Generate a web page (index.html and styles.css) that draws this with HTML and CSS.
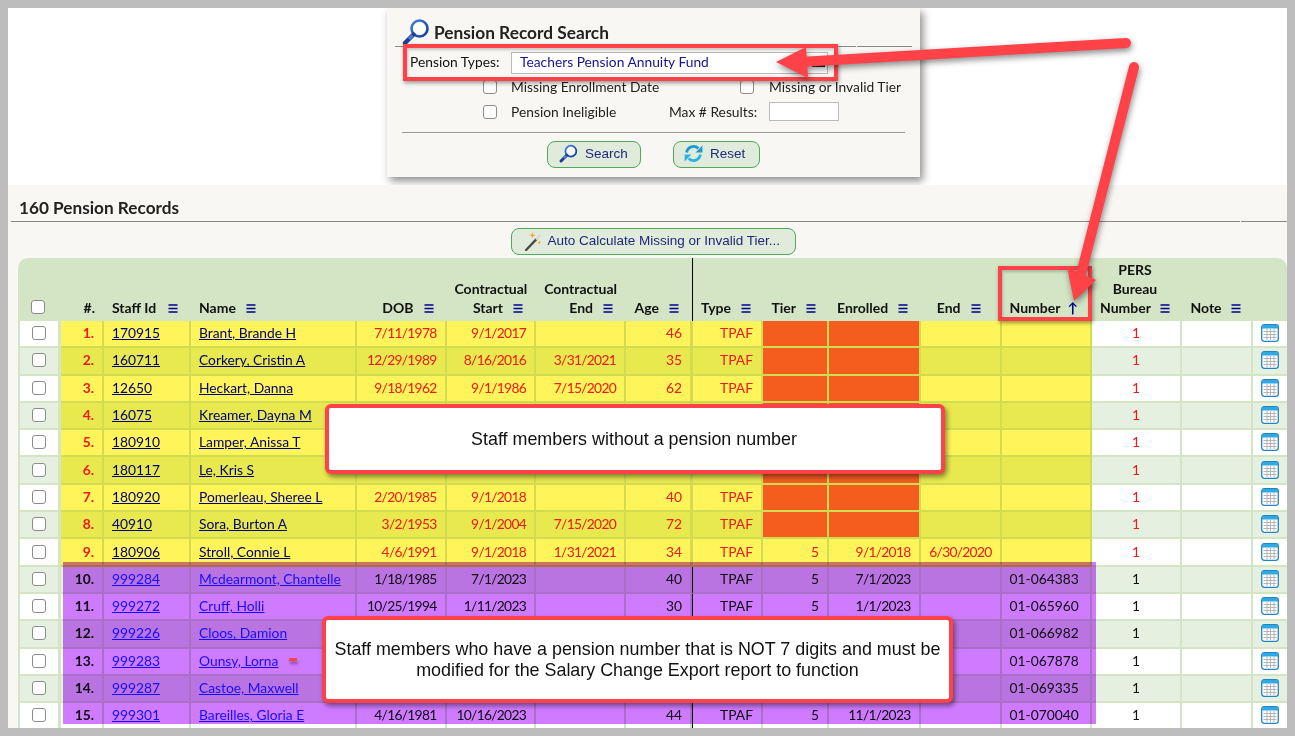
FILE: index.html
```html
<!DOCTYPE html>
<html lang="en">
<head>
<meta charset="utf-8">
<title>Pension Record Search</title>
<link rel="stylesheet" href="styles.css">
</head>
<body>
<svg class="defs" width="0" height="0" aria-hidden="true">
  <defs>
    <linearGradient id="lens" x1="0" y1="0" x2="1" y2="1"><stop offset="0" stop-color="#3f82dc"/><stop offset="1" stop-color="#0b3a9a"/></linearGradient>
    <symbol id="i-mag" viewBox="0 0 28 28">
      <circle cx="17.5" cy="10.5" r="8" fill="#fbfbf8" stroke="url(#lens)" stroke-width="2.6"/>
      <path d="M11.5 16.5 3 25" stroke="#1c3f94" stroke-width="4.4" stroke-linecap="round"/>
      <path d="M10.5 17.5 7 21" stroke="#4d82d8" stroke-width="3"/>
    </symbol>
    <symbol id="i-reset" viewBox="0 0 18 18">
      <path d="M2.5 8A6.6 6.6 0 0 1 13.6 4.2" fill="none" stroke="#1b9ad6" stroke-width="2.6"/>
      <path d="M11 8h6.4V1.4z" fill="#1b9ad6"/>
      <path d="M15.5 10A6.6 6.6 0 0 1 4.4 13.8" fill="none" stroke="#28b4e4" stroke-width="2.6"/>
      <path d="M7 10H.6v6.6z" fill="#28b4e4"/>
    </symbol>
    <symbol id="i-wand" viewBox="0 0 18 18">
      <path d="M2 17 12 6.500" stroke="#4a4a44" stroke-width="2.200" stroke-linecap="round"/>
      <path d="M12 6.500 15 3.500" stroke="#d8d8d0" stroke-width="2.200" stroke-linecap="round"/>
      <path d="M8 0l.7 2.300 2.300.7-2.300.7L8 6l-.7-2.300L5 3l2.300-.7z" fill="#f3a52c"/>
      <path d="M14.500 8l.5 1.500 1.500.5-1.500.5-.5 1.500-.5-1.500-1.500-.5 1.500-.5z" fill="#f3a52c"/>
    </symbol>
    <symbol id="i-menu" viewBox="0 0 10 10">
      <path d="M0 1h10M0 5h10M0 9h10" stroke="#000090" stroke-width="1.700"/>
    </symbol>
    <symbol id="i-cal" viewBox="0 0 18 18">
      <rect x=".7" y=".7" width="16.600" height="16.600" rx="2.500" fill="#fff" stroke="#1f86c6" stroke-width="1.300"/>
      <path d="M1 3a2 2 0 0 1 2-2h12a2 2 0 0 1 2 2v1.500H1z" fill="#2fa8e4"/>
      <path d="M2.500 7.500h13M2.500 10.500h13M2.500 13.500h13M6 5v11M9.500 5v11M13 5v11" stroke="#b4b4b4" stroke-width="1" fill="none"/>
    </symbol>
  </defs>
</svg>

<div class="window">
  <div class="top">
    <section class="panel">
      <header class="panel-head">
        <svg class="mag-lg"><use href="#i-mag"/></svg>
        <h1 class="panel-title">Pension Record Search</h1>
      </header>
      <div class="rule-split"><span></span><span></span></div>
      <div class="type-row">
        <label class="type-label">Pension Types:</label>
        <div class="select"><span>Teachers Pension Annuity Fund</span><i class="select-dash"></i></div>
      </div>
      <div class="filters">
        <input type="checkbox" class="check"><span>Missing Enrollment Date</span>
        <input type="checkbox" class="check"><span>Missing or Invalid Tier</span>
      </div>
      <div class="filters second">
        <input type="checkbox" class="check"><span>Pension Ineligible</span>
        <span class="max-label">Max # Results:</span><div class="max-input"></div>
      </div>
      <div class="panel-rule"></div>
      <div class="actions">
        <button class="btn btn-search"><svg class="btn-icon"><use href="#i-mag"/></svg>Search</button>
        <button class="btn btn-reset"><svg class="btn-icon"><use href="#i-reset"/></svg>Reset</button>
      </div>
    </section>
  </div>

  <div class="records">
    <h2 class="records-title">160 Pension Records</h2>
    <div class="rule-split wide"><span></span><span></span></div>
    <div class="auto-row">
      <button class="btn btn-auto"><svg class="btn-icon"><use href="#i-wand"/></svg>Auto Calculate Missing or Invalid Tier...</button>
    </div>
    <table class="grid">
      <colgroup>
        <col class="c1"><col class="c2"><col class="c3"><col class="c4"><col class="c5"><col class="c6"><col class="c7"><col class="c8"><col class="c9"><col class="c10"><col class="c11"><col class="c12"><col class="c13"><col class="c14"><col class="c15"><col class="c16">
      </colgroup>
      <thead>
        <tr>
          <th class="ctr"><input type="checkbox" class="check"></th>
          <th class="r">#.</th>
          <th class="l staff-h">Staff Id<svg class="mi"><use href="#i-menu"/></svg></th>
          <th class="l">Name<svg class="mi"><use href="#i-menu"/></svg></th>
          <th class="r">DOB<svg class="mi"><use href="#i-menu"/></svg></th>
          <th class="r">Contractual<br>Start<svg class="mi"><use href="#i-menu"/></svg></th>
          <th class="r">Contractual<br>End<svg class="mi"><use href="#i-menu"/></svg></th>
          <th class="r">Age<svg class="mi"><use href="#i-menu"/></svg></th>
          <th class="r">Type<svg class="mi"><use href="#i-menu"/></svg></th>
          <th class="r">Tier<svg class="mi"><use href="#i-menu"/></svg></th>
          <th class="r">Enrolled<svg class="mi"><use href="#i-menu"/></svg></th>
          <th class="r end-h">End<svg class="mi"><use href="#i-menu"/></svg></th>
          <th class="l pad-num">Number<span class="sort">↑</span></th>
          <th class="ctr">PERS<br>Bureau<br>Number<svg class="mi"><use href="#i-menu"/></svg></th>
          <th class="ctr">Note<svg class="mi"><use href="#i-menu"/></svg></th>
          <th></th>
        </tr>
      </thead>
      <tbody>
        <tr class="warn"><td class="ctr"><input type="checkbox" class="check"></td><td class="idx">1.</td><td><a href="#">170915</a></td><td><a href="#">Brant, Brande H</a></td><td class="r">7/11/1978</td><td class="r">9/1/2017</td><td class="r"></td><td class="r">46</td><td class="r">TPAF</td><td class="bad"></td><td class="bad"></td><td></td><td class="last"></td><td class="ctr alert">1</td><td></td><td class="ctr"><svg class="cal"><use href="#i-cal"/></svg></td></tr>
        <tr class="warn"><td class="ctr"><input type="checkbox" class="check"></td><td class="idx">2.</td><td><a href="#">160711</a></td><td><a href="#">Corkery, Cristin A</a></td><td class="r">12/29/1989</td><td class="r">8/16/2016</td><td class="r">3/31/2021</td><td class="r">35</td><td class="r">TPAF</td><td class="bad"></td><td class="bad"></td><td></td><td class="last"></td><td class="ctr alert">1</td><td></td><td class="ctr"><svg class="cal"><use href="#i-cal"/></svg></td></tr>
        <tr class="warn"><td class="ctr"><input type="checkbox" class="check"></td><td class="idx">3.</td><td><a href="#">12650</a></td><td><a href="#">Heckart, Danna</a></td><td class="r">9/18/1962</td><td class="r">9/1/1986</td><td class="r">7/15/2020</td><td class="r">62</td><td class="r">TPAF</td><td class="bad"></td><td class="bad"></td><td></td><td class="last"></td><td class="ctr alert">1</td><td></td><td class="ctr"><svg class="cal"><use href="#i-cal"/></svg></td></tr>
        <tr class="warn"><td class="ctr"><input type="checkbox" class="check"></td><td class="idx">4.</td><td><a href="#">16075</a></td><td><a href="#">Kreamer, Dayna M</a></td><td class="r"></td><td class="r"></td><td class="r"></td><td class="r"></td><td class="r"></td><td class="bad"></td><td class="bad"></td><td></td><td class="last"></td><td class="ctr alert">1</td><td></td><td class="ctr"><svg class="cal"><use href="#i-cal"/></svg></td></tr>
        <tr class="warn"><td class="ctr"><input type="checkbox" class="check"></td><td class="idx">5.</td><td><a href="#">180910</a></td><td><a href="#">Lamper, Anissa T</a></td><td class="r"></td><td class="r"></td><td class="r"></td><td class="r"></td><td class="r"></td><td class="bad"></td><td class="bad"></td><td></td><td class="last"></td><td class="ctr alert">1</td><td></td><td class="ctr"><svg class="cal"><use href="#i-cal"/></svg></td></tr>
        <tr class="warn"><td class="ctr"><input type="checkbox" class="check"></td><td class="idx">6.</td><td><a href="#">180117</a></td><td><a href="#">Le, Kris S</a></td><td class="r"></td><td class="r"></td><td class="r"></td><td class="r"></td><td class="r"></td><td class="bad"></td><td class="bad"></td><td></td><td class="last"></td><td class="ctr alert">1</td><td></td><td class="ctr"><svg class="cal"><use href="#i-cal"/></svg></td></tr>
        <tr class="warn"><td class="ctr"><input type="checkbox" class="check"></td><td class="idx">7.</td><td><a href="#">180920</a></td><td><a href="#">Pomerleau, Sheree L</a></td><td class="r">2/20/1985</td><td class="r">9/1/2018</td><td class="r"></td><td class="r">40</td><td class="r">TPAF</td><td class="bad"></td><td class="bad"></td><td></td><td class="last"></td><td class="ctr alert">1</td><td></td><td class="ctr"><svg class="cal"><use href="#i-cal"/></svg></td></tr>
        <tr class="warn"><td class="ctr"><input type="checkbox" class="check"></td><td class="idx">8.</td><td><a href="#">40910</a></td><td><a href="#">Sora, Burton A</a></td><td class="r">3/2/1953</td><td class="r">9/1/2004</td><td class="r">7/15/2020</td><td class="r">72</td><td class="r">TPAF</td><td class="bad"></td><td class="bad"></td><td></td><td class="last"></td><td class="ctr alert">1</td><td></td><td class="ctr"><svg class="cal"><use href="#i-cal"/></svg></td></tr>
        <tr class="warn"><td class="ctr"><input type="checkbox" class="check"></td><td class="idx">9.</td><td><a href="#">180906</a></td><td><a href="#">Stroll, Connie L</a></td><td class="r">4/6/1991</td><td class="r">9/1/2018</td><td class="r">1/31/2021</td><td class="r">34</td><td class="r">TPAF</td><td class="r">5</td><td class="r">9/1/2018</td><td class="r">6/30/2020</td><td class="last"></td><td class="ctr alert">1</td><td></td><td class="ctr"><svg class="cal"><use href="#i-cal"/></svg></td></tr>
        <tr class="ok"><td class="ctr"><input type="checkbox" class="check"></td><td class="idx">10.</td><td><a href="#">999284</a></td><td><a href="#">Mcdearmont, Chantelle</a></td><td class="r">1/18/1985</td><td class="r">7/1/2023</td><td class="r"></td><td class="r">40</td><td class="r">TPAF</td><td class="r">5</td><td class="r">7/1/2023</td><td class="r"></td><td class="l pad-num">01-064383</td><td class="ctr">1</td><td></td><td class="ctr"><svg class="cal"><use href="#i-cal"/></svg></td></tr>
        <tr class="ok"><td class="ctr"><input type="checkbox" class="check"></td><td class="idx">11.</td><td><a href="#">999272</a></td><td><a href="#">Cruff, Holli</a></td><td class="r">10/25/1994</td><td class="r">1/11/2023</td><td class="r"></td><td class="r">30</td><td class="r">TPAF</td><td class="r">5</td><td class="r">1/1/2023</td><td class="r"></td><td class="l pad-num">01-065960</td><td class="ctr">1</td><td></td><td class="ctr"><svg class="cal"><use href="#i-cal"/></svg></td></tr>
        <tr class="ok"><td class="ctr"><input type="checkbox" class="check"></td><td class="idx">12.</td><td><a href="#">999226</a></td><td><a href="#">Cloos, Damion</a></td><td class="r"></td><td class="r"></td><td class="r"></td><td class="r"></td><td class="r"></td><td class="r"></td><td class="r"></td><td class="r"></td><td class="l pad-num">01-066982</td><td class="ctr">1</td><td></td><td class="ctr"><svg class="cal"><use href="#i-cal"/></svg></td></tr>
        <tr class="ok"><td class="ctr"><input type="checkbox" class="check"></td><td class="idx">13.</td><td><a href="#">999283</a></td><td><a href="#">Ounsy, Lorna</a></td><td class="r"></td><td class="r"></td><td class="r"></td><td class="r"></td><td class="r"></td><td class="r"></td><td class="r"></td><td class="r"></td><td class="l pad-num">01-067878</td><td class="ctr">1</td><td></td><td class="ctr"><svg class="cal"><use href="#i-cal"/></svg></td></tr>
        <tr class="ok"><td class="ctr"><input type="checkbox" class="check"></td><td class="idx">14.</td><td><a href="#">999287</a></td><td><a href="#">Castoe, Maxwell</a></td><td class="r"></td><td class="r"></td><td class="r"></td><td class="r"></td><td class="r"></td><td class="r"></td><td class="r"></td><td class="r"></td><td class="l pad-num">01-069335</td><td class="ctr">1</td><td></td><td class="ctr"><svg class="cal"><use href="#i-cal"/></svg></td></tr>
        <tr class="ok"><td class="ctr"><input type="checkbox" class="check"></td><td class="idx">15.</td><td><a href="#">999301</a></td><td><a href="#">Bareilles, Gloria E</a></td><td class="r">4/16/1981</td><td class="r">10/16/2023</td><td class="r"></td><td class="r">44</td><td class="r">TPAF</td><td class="r">5</td><td class="r">11/1/2023</td><td class="r"></td><td class="l pad-num">01-070040</td><td class="ctr">1</td><td></td><td class="ctr"><svg class="cal"><use href="#i-cal"/></svg></td></tr>
      </tbody>
    </table>
  </div>

  <div class="tint"></div>
  <div class="mark"></div>
  <div class="callout callout-a">Staff members without a pension number</div>
  <div class="callout callout-b">Staff members who have a pension number that is NOT 7 digits and must be<br>modified for the Salary Change Export report to function</div>
  <div class="focus focus-type"></div>
  <div class="focus focus-number"></div>
  <svg class="arrows" width="1295" height="736" viewBox="0 0 1295 736">
    <path d="M1126 43 800 62" stroke="#ff4148" stroke-width="10" stroke-linecap="round" fill="none"/>
    <path d="M776 62 806 47 808 78z" fill="#ff4148"/>
    <path d="M1134 67 1080 278" stroke="#ff4148" stroke-width="10" stroke-linecap="round" fill="none"/>
    <path d="M1074 301 1067 267 1096 280z" fill="#ff4148"/>
  </svg>
</div>
</body>
</html>
```
FILE: styles.css
```css
* { box-sizing: border-box; }
html, body { margin: 0; height: 736px; overflow: hidden; }
body { background: #bdbdbd; font-family: "Lato", "Noto Sans", sans-serif; color: #111; font-size: 14px; }
.defs { position: absolute; }
.window { position: absolute; left: 8px; top: 8px; width: 1279px; height: 720px; background: #fff; overflow: hidden; }

/* top search panel */
.top { height: 177px; padding-left: 379px; }
.panel { width: 533px; height: 169px; background: #f8f7f3; box-shadow: 3px 4px 8px rgba(0,0,0,.45); padding: 9px 8px 0; }
.panel-head { display: flex; align-items: flex-end; height: 29px; padding-left: 7px; gap: 4px; }
.mag-lg { width: 28px; height: 28px; }
.panel-title { margin: 0 0 2px; font-size: 17.300px; font-weight: 700; color: #222; line-height: 22px; }
.rule-split { display: flex; gap: 1px; height: 1px; }
.rule-split span { background: #888; height: 1px; }
.rule-split span:first-child { width: 461px; }
.rule-split span:last-child { width: 55px; }
.type-row { display: flex; align-items: flex-start; height: 27px; padding: 5px 0 0 15px; }
.type-label { width: 101px; font-size: 13.800px; line-height: 19px; }
.select { width: 317px; height: 22px; background: #fff; border: 1px solid #bbb; display: flex; align-items: center; padding: 0 0 4px 8px; color: #14148c; font-size: 13.800px; position: relative; }
.select-dash { position: absolute; right: 2px; bottom: 6px; width: 13px; height: 2px; background: #222; }
.filters { display: grid; grid-template-columns: 28px 229px 29px auto; align-items: center; height: 25px; padding-left: 88px; font-size: 13.800px; color: #222; }
.filters.second { grid-template-columns: 28px 158px 100px auto; }
.filters .max-label { white-space: nowrap; }
.max-input { width: 70px; height: 19px; background: #fff; border: 1px solid #bbb; }
.check { appearance: none; width: 14px; height: 14px; margin: 0; background: #fff; border: 1.500px solid #8c8c8c; border-radius: 3px; display: block; }
.panel-rule { height: 1px; background: #999; margin: 8px 7px 0; }
.actions { display: flex; justify-content: center; gap: 32px; padding: 8px 0 0 0; }
.btn { display: inline-flex; align-items: center; height: 27px; padding: 0 12px 2px 11px; background: #e1ebdb; border: 1px solid #4ea95a; border-radius: 8px; font-family: "Liberation Sans", Arial, sans-serif; font-size: 13.500px; color: #1d2a7a; }
.btn-icon { width: 19px; height: 19px; margin-right: 7px; flex: none; }
.btn-search { width: 94px; }
.btn-reset { width: 87px; padding-left: 10px; }

/* records */
.records { background: #f8f7f3; height: 543px; padding: 13px 0 0 3px; }
.records-title { margin: 0; padding-left: 8px; font-size: 17.200px; font-weight: 700; line-height: 20px; color: #222; }
.rule-split.wide { margin-top: 3px; }
.rule-split.wide span:first-child { width: 1229px; }
.rule-split.wide span:last-child { width: 46px; }
.auto-row { display: flex; justify-content: center; padding: 6px 0 0 8px; }
.btn-auto { width: 285px; padding: 0 0 2px 36px; position: relative; }
.btn-auto .btn-icon { position: absolute; left: 12px; top: 3px; }
.grid { margin: 3px 0 0 7px; width: 1269px; table-layout: fixed; border-collapse: separate; border-spacing: 0; font-size: 14px; }
.c1 { width: 43px; } .c2 { width: 43px; } .c3 { width: 87px; } .c4 { width: 166px; } .c5 { width: 89.500px; } .c6 { width: 89.500px; } .c7 { width: 90px; } .c8 { width: 66px; } .c9 { width: 71px; } .c10 { width: 66px; } .c11 { width: 91.500px; } .c12 { width: 81px; } .c13 { width: 90.500px; } .c14 { width: 90px; } .c15 { width: 71px; } .c16 { width: 34px; }

th { background: #d3e5c5; height: 63px; vertical-align: bottom; padding: 0 9px 4px 8px; font-weight: 700; font-size: 14px; line-height: 19px; color: #111; white-space: nowrap; }
th:first-child { border-top-left-radius: 10px; }
th:last-child { border-top-right-radius: 10px; }
th.ctr, td.ctr { text-align: center; }
th.ctr { padding-right: 11px; padding-left: 7px; }
th.r, td.r { text-align: right; }
th.l { text-align: left; }
th .check { margin: 0 auto 3px; }
th.pad-num, td.pad-num { padding-left: 8px; }
.mi { width: 10px; height: 9px; margin-left: 10px; }
th.r .mi { margin-right: 4px; }
th.ctr .mi { margin-left: 9px; }
th.staff-h .mi { margin-left: 12px; }
th.end-h { padding-right: 17px; }
.sort { color: #000090; margin-left: 7px; font-weight: 700; }
tr > :nth-child(9) { border-left: 1px solid #000; }

td { height: 27.300px; padding: 0 8px 1px; border-right: 2px solid #d3e5c5; border-bottom: 2px solid #d3e5c5; background: #fff; font-size: 13.800px; line-height: 16px; white-space: nowrap; overflow: hidden; }
td.r { padding-left: 1px; }
td:nth-child(5), td:nth-child(6), td:nth-child(7), td:nth-child(11), td:nth-child(12) { letter-spacing: -.7px; }
td:first-child { border-left: 2px solid #d3e5c5; border-right-width: 3px; padding: 0 0 1px; }
td:first-child .check { margin: 0 auto; }
td:last-child { border-right: 0; padding: 0 0 1px; }
tbody tr:nth-child(even) td { background: #e6f0e1; }
a { color: #1a1aff; }
.idx { font-weight: 700; text-align: right; }

.warn td:nth-child(n+2):nth-child(-n+13) { background: #fff55a; color: #f01818; border-color: #d2dc52; }
.warn td:nth-child(9) { border-left-color: #000; }
.warn:nth-child(even) td:nth-child(n+2):nth-child(-n+13) { background: #e8e94f; }
.warn td:nth-child(n+2):nth-child(-n+13).bad { background: #f55d1e; }
.warn a { color: #000070; }
.warn .idx { color: #f01010; }
.alert { color: #f01818; }
.cal { width: 18px; height: 18px; display: block; margin: 0 auto; }

/* annotation layer */
.tint { position: absolute; left: 55px; top: 554px; width: 1033px; height: 162px; background: #cf7bff; mix-blend-mode: multiply; }
.mark { position: absolute; left: 281px; top: 650px; width: 8px; height: 3px; background: #ff4148; box-shadow: 1px 3px 3px rgba(0,0,0,.35); }
.callout { position: absolute; display: flex; align-items: center; justify-content: center; text-align: center; background: #fff; border: 4px solid #ff4148; border-radius: 6px; box-shadow: 2px 3px 5px rgba(0,0,0,.45); font-family: "Liberation Sans", Arial, sans-serif; font-size: 17.900px; line-height: 21px; color: #111; }
.callout-a { left: 317px; top: 396px; width: 620px; height: 70px; padding-right: 2px; }
.callout-b { left: 314px; top: 608px; width: 631px; height: 87px; }
.focus { position: absolute; border: 4px solid #ff4148; box-shadow: 1px 2px 4px rgba(0,0,0,.4), inset 1px 2px 3px rgba(0,0,0,.2); }
.focus-type { left: 395px; top: 36px; width: 435px; height: 37px; }
.focus-number { left: 990px; top: 258px; width: 94px; height: 55px; }
.arrows { position: absolute; left: -8px; top: -8px; filter: drop-shadow(1px 3px 3px rgba(0,0,0,.45)); pointer-events: none; }
```
